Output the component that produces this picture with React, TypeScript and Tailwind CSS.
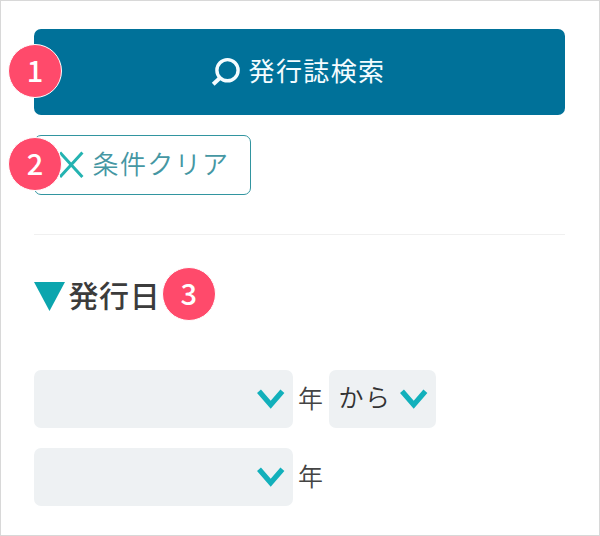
import type { ReactNode } from 'react';

function Badge({ children, className = '' }: { children: ReactNode; className?: string }) {
  return (
    <span
      className={`flex size-[54px] shrink-0 items-center justify-center rounded-full border border-white bg-[#ff4a6b] pb-[4px] text-[29px] leading-none font-medium text-white ${className}`}
    >
      {children}
    </span>
  );
}

function Chevron() {
  return (
    <svg width="28" height="22" viewBox="0 0 28 22" fill="none" className="shrink-0">
      <path d="M2 3.2 13.7 16.8 25.4 3.2" stroke="#12b0bb" strokeWidth="5.2" />
    </svg>
  );
}

function YearSelect() {
  return (
    <button className="flex h-[58px] w-[259px] items-center justify-end rounded-[7px] bg-[#eef1f3] pr-[8px]">
      <Chevron />
    </button>
  );
}

export default function App() {
  return (
    <main className="h-[536px] w-[600px] overflow-hidden border border-[#d8d8d8] bg-white pt-7 pr-[34px] pl-[32.5px] font-['Noto_Sans_CJK_JP',sans-serif]">
      <div className="relative">
        <button className="flex h-[86px] w-full items-center rounded-[7px] bg-[#007199] pl-[177px] text-[#f4fcff]">
          <svg width="30" height="30" viewBox="0 0 30 30" fill="none" className="shrink-0">
            <circle cx="16.5" cy="13.2" r="10.6" stroke="currentColor" strokeWidth="3.4" />
            <path d="M9.7 20.2 2.2 27.2" stroke="currentColor" strokeWidth="4" />
          </svg>
          <span className="ml-[8px] pb-[4px] text-[26px] leading-none tracking-[1.4px]">発行誌検索</span>
        </button>
        <Badge className="absolute top-[15px] -left-[25.5px]">1</Badge>
      </div>

      <div className="relative mt-5 w-[217px]">
        <button className="flex h-[60px] w-full items-center rounded-[7px] border border-[#3295a0] pl-[25px] text-[#4597a3]">
          <svg width="26" height="28" viewBox="0 0 26 28" fill="none" className="shrink-0">
            <path d="M0 1.5 22.4 26M22.4 1.5 0 26" stroke="#24b3b1" strokeWidth="3" />
          </svg>
          <span className="ml-[7px] pb-[5px] text-[26px] leading-none font-[350] tracking-[1.4px]">条件クリア</span>
        </button>
        <Badge className="absolute top-[2px] -left-[25.5px]">2</Badge>
      </div>

      <hr className="mt-[39px] border-[#f0f0f0]" />

      <div className="mt-[32px] flex h-[54px] items-center">
        <svg width="31" height="29" viewBox="0 0 31 29" className="mt-[5px]">
          <path d="M0 0H31L15.5 29Z" fill="#0ba5ae" />
        </svg>
        <h2 className="ml-1 text-[30px] leading-none font-medium tracking-[0.6px] text-[#3c3c3c]">発行日</h2>
        <Badge className="ml-[1.5px]">3</Badge>
      </div>

      <div className="mt-[48.5px] flex items-center text-[25px] leading-none font-[350] text-[#444444]">
        <YearSelect />
        <span className="mx-[5.5px] pb-[2px]">年</span>
        <button className="flex h-[58px] w-[107px] items-center justify-between rounded-[7px] bg-[#eef1f3] pr-[8px] pl-[10px]">
          <span className="pb-[4px] text-[25px] leading-none font-[350] tracking-[1.4px] text-[#333333]">から</span>
          <Chevron />
        </button>
      </div>
      <div className="mt-5 flex items-center text-[25px] leading-none font-[350] text-[#444444]">
        <YearSelect />
        <span className="mx-[5.5px] pb-[2px]">年</span>
      </div>
    </main>
  );
}
